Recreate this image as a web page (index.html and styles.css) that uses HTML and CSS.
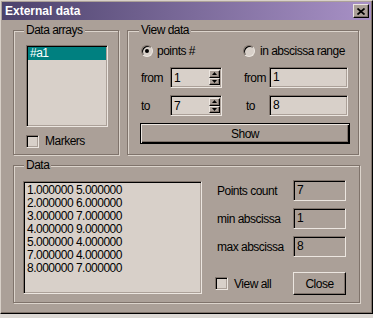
FILE: index.html
```html
<!DOCTYPE html>
<html lang="en">
<head>
    <meta charset="UTF-8">
    <meta name="viewport" content="width=device-width, initial-scale=1.0">
    <title>External data</title>
    <link rel="stylesheet" href="styles.css">
</head>
<body>
    <div class="window">
        <div class="titlebar">
            <span class="title">External data</span>
            <span class="title-close raised">
                <svg width="8" height="7" viewBox="0 0 8 7"><path d="M0.5 0.5 L7.5 6.5 M7.5 0.5 L0.5 6.5" stroke="#000" stroke-width="1.7" fill="none"/></svg>
            </span>
        </div>

        <div class="client">
            <div class="top-row">
                <!-- Data arrays -->
                <fieldset class="group arrays">
                    <legend>Data arrays</legend>
                    <div class="listbox sunken light">
                        <div class="list-item selected">#a1</div>
                    </div>
                    <div class="check-row">
                        <span class="checkbox sunken light"></span>
                        <span>Markers</span>
                    </div>
                </fieldset>

                <!-- View data -->
                <fieldset class="group view">
                    <legend>View data</legend>
                    <div class="view-grid">
                        <div class="radio-row span-left"><span class="radio checked"></span>points #</div>
                        <div class="radio-row span-right"><span class="radio"></span>in abscissa range</div>

                        <span class="lbl">from</span>
                        <div class="spin sunken light">
                            <span class="val">1</span>
                            <span class="updown">
                                <span class="ud-btn raised"><svg width="5" height="3" viewBox="0 0 5 3"><path d="M2.5 0 L5 3 L0 3 Z" fill="#000"/></svg></span>
                                <span class="ud-btn raised"><svg width="5" height="3" viewBox="0 0 5 3"><path d="M0 0 L5 0 L2.5 3 Z" fill="#000"/></svg></span>
                            </span>
                        </div>
                        <span class="lbl right">from</span>
                        <div class="edit sunken light">1</div>

                        <span class="lbl">to</span>
                        <div class="spin sunken light">
                            <span class="val">7</span>
                            <span class="updown">
                                <span class="ud-btn raised"><svg width="5" height="3" viewBox="0 0 5 3"><path d="M2.5 0 L5 3 L0 3 Z" fill="#000"/></svg></span>
                                <span class="ud-btn raised"><svg width="5" height="3" viewBox="0 0 5 3"><path d="M0 0 L5 0 L2.5 3 Z" fill="#000"/></svg></span>
                            </span>
                        </div>
                        <span class="lbl right to-right">to</span>
                        <div class="edit sunken light">8</div>
                    </div>
                    <div class="button default show-btn">Show</div>
                </fieldset>
            </div>

            <!-- Data -->
            <fieldset class="group data">
                <legend>Data</legend>
                <div class="data-body">
                    <div class="textbox sunken light">
                        <div>1.000000 5.000000</div>
                        <div>2.000000 6.000000</div>
                        <div>3.000000 7.000000</div>
                        <div>4.000000 9.000000</div>
                        <div>5.000000 4.000000</div>
                        <div>7.000000 4.000000</div>
                        <div>8.000000 7.000000</div>
                    </div>
                    <div class="stats">
                        <span class="lbl">Points count</span>
                        <div class="edit sunken">7</div>
                        <span class="lbl">min abscissa</span>
                        <div class="edit sunken">1</div>
                        <span class="lbl">max abscissa</span>
                        <div class="edit sunken">8</div>
                        <div class="check-row view-all">
                            <span class="checkbox sunken light"></span>
                            <span>View all</span>
                        </div>
                        <div class="button raised close-btn">Close</div>
                    </div>
                </div>
            </fieldset>
        </div>
    </div>
</body>
</html>
```

FILE: styles.css
```css
body {
    margin: 0;
    background-color: #dcd8d4;
    font-family: "Liberation Sans", Arial, sans-serif;
    font-size: 12px;
    letter-spacing: -0.5px;
    color: #000;
}
.window {
    box-sizing: border-box;
    width: 373px;
    height: 314px;
    padding: 1px;
    background-color: #aba098;
    border: 1px solid;
    border-color: #d8d0c8 #000 #000 #d8d0c8;
    box-shadow: inset -1px -1px 0 #7f736b;
}
.titlebar {
    display: flex;
    align-items: center;
    justify-content: space-between;
    height: 18px;
    padding: 0 2px 0 3px;
    background: linear-gradient(to right, #4c426c, #a891c6);
}
.title {
    font-weight: bold;
    letter-spacing: 0;
    color: #fff;
}
.title-close {
    box-sizing: border-box;
    width: 16px;
    height: 14px;
    display: flex;
    align-items: center;
    justify-content: center;
    background-color: #aba098;
}

/* bevels */
.sunken {
    box-sizing: border-box;
    border: 1px solid;
    border-color: #7f736b #ece6e0 #ece6e0 #7f736b;
    box-shadow: inset 1px 1px 0 #000, inset -1px -1px 0 #aba098;
}
.raised {
    box-sizing: border-box;
    border: 1px solid;
    border-color: #ece6e0 #000 #000 #ece6e0;
    box-shadow: inset -1px -1px 0 #7f736b;
}
.light {
    background-color: #d8d0c9;
}

.client {
    padding: 3px 0 0 11px;
}
.top-row {
    display: flex;
    gap: 8px;
}

/* group boxes */
.group {
    box-sizing: border-box;
    margin: 0;
    min-width: 0;
    border: 1px solid #7f736b;
    box-shadow: inset 1px 1px 0 #dcd4cc, 1px 1px 0 #dcd4cc;
}
.group legend {
    padding: 0 2px;
    margin-left: -2px;
    line-height: 14px;
    background-color: #aba098;
}
.arrays {
    width: 106px;
    height: 132px;
    padding: 8px 0 0 12px;
}
.view {
    width: 232px;
    height: 132px;
    padding: 9px 0 0 13px;
}
.data {
    width: 347px;
    height: 145px;
    margin-top: 3px;
    padding: 9px 0 0 9px;
}
.data legend {
    margin-left: 1px;
}

/* data arrays */
.listbox {
    width: 82px;
    height: 82px;
    padding: 1px;
}
.list-item {
    height: 13px;
    line-height: 13px;
    padding-left: 2px;
}
.list-item.selected {
    background-color: #008080;
    color: #fff;
}
.check-row {
    display: flex;
    align-items: center;
    gap: 6px;
    margin-top: 7px;
    white-space: nowrap;
}
.checkbox {
    width: 13px;
    height: 13px;
}

/* view data */
.view-grid {
    display: grid;
    grid-template-columns: 29px 52px 22px 25px 79px;
    grid-template-rows: 14px 21px 21px;
    row-gap: 7px;
    align-items: center;
}
.radio-row {
    display: flex;
    align-items: center;
    gap: 4px;
    margin-bottom: 4px;
    white-space: nowrap;
}
.span-left {
    grid-column: 1 / 3;
}
.span-right {
    grid-column: 4 / 6;
    margin-left: -1px;
    gap: 5px;
}
.radio {
    box-sizing: border-box;
    width: 12px;
    height: 12px;
    border-radius: 50%;
    border: 1px solid;
    border-color: #7f736b #ece6e0 #ece6e0 #7f736b;
    box-shadow: inset 1px 1px 0 #000;
    background-color: #d8d0c9;
    display: flex;
    align-items: center;
    justify-content: center;
}
.radio.checked::after {
    content: "";
    width: 4px;
    height: 4px;
    border-radius: 50%;
    background-color: #000;
}
.lbl {
    white-space: nowrap;
}
.view-grid .right {
    grid-column: 4;
}
.view-grid .to-right {
    padding-left: 2px;
}
.spin,
.edit {
    height: 21px;
    line-height: 17px;
}
.spin {
    display: flex;
    padding: 2px 1px 2px 2px;
}
.val {
    flex: 1;
    padding-left: 1px;
    line-height: 17px;
}
.updown {
    display: flex;
    flex-direction: column;
    width: 11px;
}
.ud-btn {
    flex: 1;
    display: flex;
    align-items: center;
    justify-content: center;
    background-color: #aba098;
}
.edit {
    padding: 1px 3px;
}
.button {
    box-sizing: border-box;
    display: flex;
    align-items: center;
    justify-content: center;
    background-color: #aba098;
}
.default {
    border: 1px solid #000;
    box-shadow: inset 1px 1px 0 #ece6e0, inset -1px -1px 0 #000, inset -2px -2px 0 #7f736b;
}
.show-btn {
    width: 210px;
    height: 21px;
    margin: 7px 0 0 -1px;
}

/* data */
.data-body {
    display: flex;
    gap: 15px;
}
.textbox {
    width: 179px;
    height: 113px;
    padding: 2px 2px 0 3px;
    line-height: 13px;
}
.stats {
    display: grid;
    grid-template-columns: 76px 53px;
    grid-template-rows: 21px 21px 21px 23px;
    row-gap: 7px;
    align-items: center;
    margin-top: -1px;
}
.view-all {
    margin: 16px 0 0 -2px;
}
.close-btn {
    height: 23px;
    margin-top: 16px;
}
```
